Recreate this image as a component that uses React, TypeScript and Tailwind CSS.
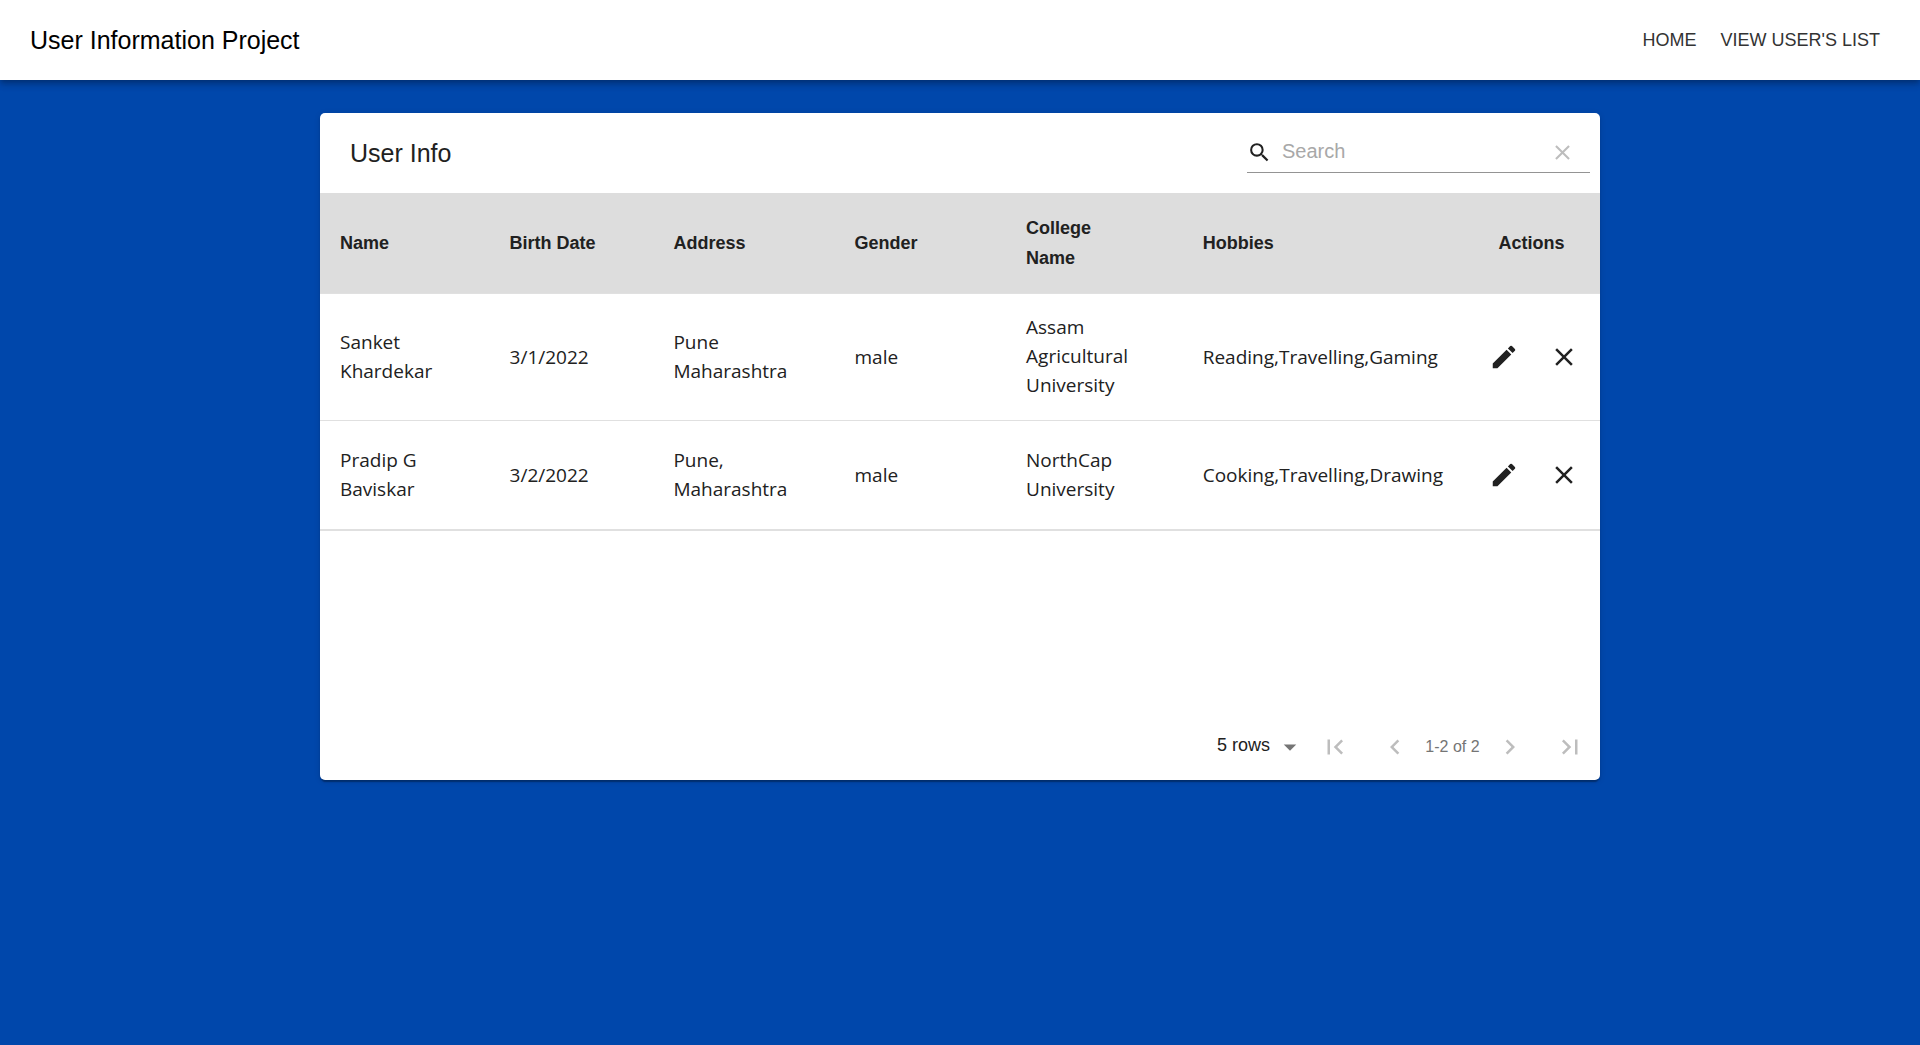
import React, { useState } from "react";
import {
  MdArrowDropDown,
  MdChevronLeft,
  MdChevronRight,
  MdClear,
  MdEdit,
  MdFirstPage,
  MdLastPage,
  MdSearch,
} from "react-icons/md";

interface User {
  name: string;
  birthDate: string;
  address: string;
  gender: string;
  college: string;
  hobbies: string;
}

const users: User[] = [
  {
    name: "Sanket Khardekar",
    birthDate: "3/1/2022",
    address: "Pune Maharashtra",
    gender: "male",
    college: "Assam Agricultural University",
    hobbies: "Reading,Travelling,Gaming",
  },
  {
    name: "Pradip G Baviskar",
    birthDate: "3/2/2022",
    address: "Pune, Maharashtra",
    gender: "male",
    college: "NorthCap University",
    hobbies: "Cooking,Travelling,Drawing",
  },
];

const columns = [
  { label: "Name", width: "w-[13.25%]" },
  { label: "Birth Date", width: "w-[12.8%]" },
  { label: "Address", width: "w-[14.15%]" },
  { label: "Gender", width: "w-[13.4%]" },
  { label: "College Name", width: "w-[13.8%]" },
  { label: "Hobbies", width: "w-[22.2%]" },
];

function NavBar() {
  return (
    <header className="relative flex h-20 items-center justify-between bg-white pr-10 pl-[30px] shadow-[0_2px_5px_-1px_rgba(0,0,0,0.2),0_5px_6px_0_rgba(0,0,0,0.14),0_1px_12px_0_rgba(0,0,0,0.12)]">
      <h1 className="text-[25px] leading-10 text-black">User Information Project</h1>
      <nav className="flex gap-6 text-[18px] leading-8 text-[#333333]">
        <a href="#home">HOME</a>
        <a href="#users">VIEW USER'S LIST</a>
      </nav>
    </header>
  );
}

function SearchField({ value, onChange }: { value: string; onChange: (v: string) => void }) {
  return (
    <div className="flex h-10 w-[343px] items-center border-b border-[#949494]">
      <label htmlFor="search" aria-label="Search">
        <MdSearch size={25} />
      </label>
      <input
        id="search"
        type="text"
        placeholder="Search"
        value={value}
        onChange={(e) => onChange(e.target.value)}
        className="ml-2.5 min-w-0 flex-1 bg-transparent pb-1 text-[20px] leading-6 outline-none placeholder:text-[#a8a8a8]"
      />
      <button type="button" aria-label="Clear search" onClick={() => onChange("")} className="mr-[15px] text-[#bdbdbd]">
        <MdClear size={25} />
      </button>
    </div>
  );
}

function PageButton({ label, children }: { label: string; children: React.ReactNode }) {
  return (
    <button type="button" disabled aria-label={label} className="flex size-[60px] items-center justify-center text-[#bdbdbd]">
      {children}
    </button>
  );
}

function Pagination() {
  return (
    <div className="flex items-center justify-end pb-[3px]">
      <div className="relative flex items-center">
        <select
          aria-label="Rows per page"
          defaultValue="5"
          className="w-[88px] appearance-none bg-transparent pb-1 text-[18px] leading-8 outline-none"
        >
          <option value="5">5 rows</option>
          <option value="10">10 rows</option>
          <option value="20">20 rows</option>
        </select>
        <MdArrowDropDown size={30} className="pointer-events-none absolute right-0 text-[#757575]" />
      </div>
      <PageButton label="First page">
        <MdFirstPage size={30} />
      </PageButton>
      <PageButton label="Previous page">
        <MdChevronLeft size={30} />
      </PageButton>
      <span className="w-[55px] text-center text-[16px] whitespace-nowrap text-[#757575]">1-2 of 2</span>
      <PageButton label="Next page">
        <MdChevronRight size={30} />
      </PageButton>
      <PageButton label="Last page">
        <MdLastPage size={30} />
      </PageButton>
    </div>
  );
}

export default function App() {
  const [query, setQuery] = useState("");
  const visible = users.filter((u) =>
    Object.values(u).some((v) => v.toLowerCase().includes(query.toLowerCase())),
  );

  return (
    <div className="min-h-screen bg-[#0047ab] font-['Liberation_Sans',Arial,sans-serif] text-[#212121]">
      <NavBar />
      <main className="mx-auto mt-[33px] w-2/3 min-w-[1100px] rounded-[5px] bg-white shadow-[0_4px_1px_-2px_rgba(0,0,0,0.2),0_2px_2px_0_rgba(0,0,0,0.14),0_1px_6px_0_rgba(0,0,0,0.12)]">
        <div className="flex h-20 items-center justify-between pr-2.5 pl-[30px]">
          <h2 className="text-[25px] leading-10">User Info</h2>
          <SearchField value={query} onChange={setQuery} />
        </div>
        <div className="min-h-[524px]">
          <table className="w-full table-fixed border-separate border-spacing-0">
            <thead>
              <tr className="bg-[#dddddd] text-left text-[18px] leading-[30px]">
                {columns.map((c) => (
                  <th key={c.label} scope="col" className={`${c.width} border-b border-[#e0e0e0] py-5 pl-5 font-bold`}>
                    <span className={c.label === "College Name" ? "block w-20" : ""}>{c.label}</span>
                  </th>
                ))}
                <th scope="col" className="border-b border-[#e0e0e0] pr-1 text-center font-bold">
                  Actions
                </th>
              </tr>
            </thead>
            <tbody className="font-['Open_Sans','Noto_Sans',sans-serif] text-[19px] leading-[29px] [&_td]:border-b [&_td]:border-[#e0e0e0] [&>tr:last-child>td]:border-b-2">
              {visible.map((u) => (
                <tr key={u.name} className="h-[110px]">
                  <td className="pr-5 pl-5">{u.name}</td>
                  <td className="pl-5">{u.birthDate}</td>
                  <td className="pr-5 pl-5">{u.address}</td>
                  <td className="pl-5">{u.gender}</td>
                  <td className="pt-[19px] pr-5 pb-5 pl-5">{u.college}</td>
                  <td className="pl-5">{u.hobbies}</td>
                  <td>
                    <div className="flex justify-end pr-1.5">
                      <button type="button" aria-label={`Edit ${u.name}`} className="flex size-[60px] items-center justify-center">
                        <MdEdit size={30} />
                      </button>
                      <button type="button" aria-label={`Delete ${u.name}`} className="flex size-[60px] items-center justify-center">
                        <MdClear size={30} />
                      </button>
                    </div>
                  </td>
                </tr>
              ))}
            </tbody>
          </table>
        </div>
        <Pagination />
      </main>
    </div>
  );
}
